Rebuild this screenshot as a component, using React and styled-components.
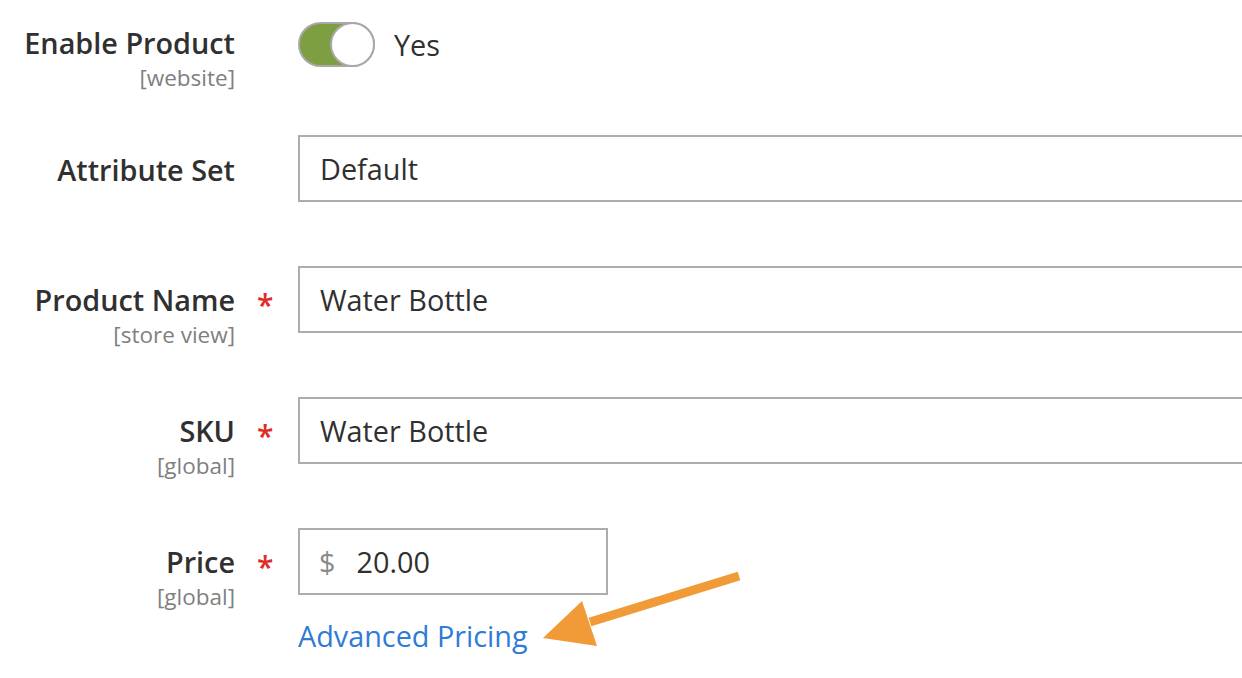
import React from "react";
import styled, { createGlobalStyle } from "styled-components";

const GlobalStyle = createGlobalStyle`
  html, body {
    margin: 0;
    padding: 0;
    background: #fff;
  }
  body {
    font-family: "Open Sans", "Noto Sans", sans-serif;
    color: #303030;
  }
`;

const Page = styled.div`
  position: relative;
  width: 1242px;
  height: 678px;
  overflow: hidden;
  box-sizing: border-box;
  padding-top: 22px;
  display: flex;
  flex-direction: column;
  gap: 64px;
`;

const Field = styled.div`
  display: grid;
  grid-template-columns: 235px 63px 1fr;
  align-items: start;
  height: ${(p) => p.$height || 67}px;
`;

const LabelCol = styled.div`
  text-align: right;
  padding-top: ${(p) => p.$offset ?? 14}px;
  white-space: nowrap;
`;

const LabelTitle = styled.div`
  font-size: 28.8px;
  font-weight: 600;
  line-height: 40px;
  color: #303030;
`;

const Scope = styled.div`
  font-size: 22.5px;
  line-height: 29px;
  color: #7f7f7f;
`;

const Required = styled.div`
  padding-left: 22px;
  padding-top: 19px;
  font-size: 30px;
  line-height: 40px;
  color: #e02b27;
  font-weight: 600;
`;

const Control = styled.div`
  display: flex;
  flex-direction: column;
  align-items: flex-start;
  min-width: 0;
`;

const TextInput = styled.input`
  box-sizing: border-box;
  width: calc(100% + 20px);
  height: 67px;
  border: 2px solid #adadad;
  border-radius: 0;
  padding: 0 20px;
  font-family: "Open Sans", sans-serif;
  font-size: 28.8px;
  color: #303030;
  background: #fff;
  outline: none;
`;

const PriceBox = styled.div`
  box-sizing: border-box;
  width: 310px;
  height: 67px;
  border: 2px solid #adadad;
  display: flex;
  align-items: center;
  padding-left: 19px;
  gap: 21px;
  font-size: 28.8px;
`;

const Currency = styled.span`
  color: #8a8a8a;
`;

const PriceValue = styled.span`
  color: #303030;
`;

const AdvancedLink = styled.a`
  margin-top: 21px;
  font-size: 28.8px;
  line-height: 40px;
  color: #2f7bd5;
  text-decoration: none;
  cursor: pointer;
`;

const ToggleWrap = styled.div`
  display: flex;
  align-items: center;
  gap: 19px;
`;

const Switch = styled.div`
  position: relative;
  box-sizing: border-box;
  width: 77px;
  height: 45px;
  border-radius: 23px;
  background: #7d9f42;
  border: 2px solid #a9a9a9;
`;

const Knob = styled.div`
  position: absolute;
  top: -2px;
  right: -2px;
  box-sizing: border-box;
  width: 45px;
  height: 45px;
  border-radius: 50%;
  background: #fff;
  border: 2px solid #a9a9a9;
`;

const ToggleText = styled.span`
  font-size: 28.8px;
  line-height: 40px;
  color: #303030;
`;

const Annotation = styled.svg`
  position: absolute;
  left: 0;
  top: 0;
  pointer-events: none;
`;

function Label({ title, scope, offset }) {
  return (
    <LabelCol $offset={offset}>
      <LabelTitle>{title}</LabelTitle>
      {scope && <Scope>{scope}</Scope>}
    </LabelCol>
  );
}

export default function App() {
  return (
    <>
      <GlobalStyle />
      <Page>
        <Field $height={49}>
          <Label title="Enable Product" scope="[website]" offset={1} />
          <div />
          <Control>
            <ToggleWrap>
              <Switch>
                <Knob />
              </Switch>
              <ToggleText>Yes</ToggleText>
            </ToggleWrap>
          </Control>
        </Field>

        <Field>
          <Label title="Attribute Set" offset={15} />
          <div />
          <Control>
            <TextInput readOnly value="Default" />
          </Control>
        </Field>

        <Field>
          <Label title="Product Name" scope="[store view]" />
          <Required>*</Required>
          <Control>
            <TextInput readOnly value="Water Bottle" />
          </Control>
        </Field>

        <Field>
          <Label title="SKU" scope="[global]" />
          <Required>*</Required>
          <Control>
            <TextInput readOnly value="Water Bottle" />
          </Control>
        </Field>

        <Field>
          <Label title="Price" scope="[global]" />
          <Required>*</Required>
          <Control>
            <PriceBox>
              <Currency>$</Currency>
              <PriceValue>20.00</PriceValue>
            </PriceBox>
            <AdvancedLink>Advanced Pricing</AdvancedLink>
          </Control>
        </Field>

        <Annotation width="1242" height="678" viewBox="0 0 1242 678">
          <line x1="739" y1="576" x2="590" y2="622" stroke="#f09a38" strokeWidth="9" />
          <polygon points="543,638 582,601 597,646" fill="#f09a38" />
        </Annotation>
      </Page>
    </>
  );
}
